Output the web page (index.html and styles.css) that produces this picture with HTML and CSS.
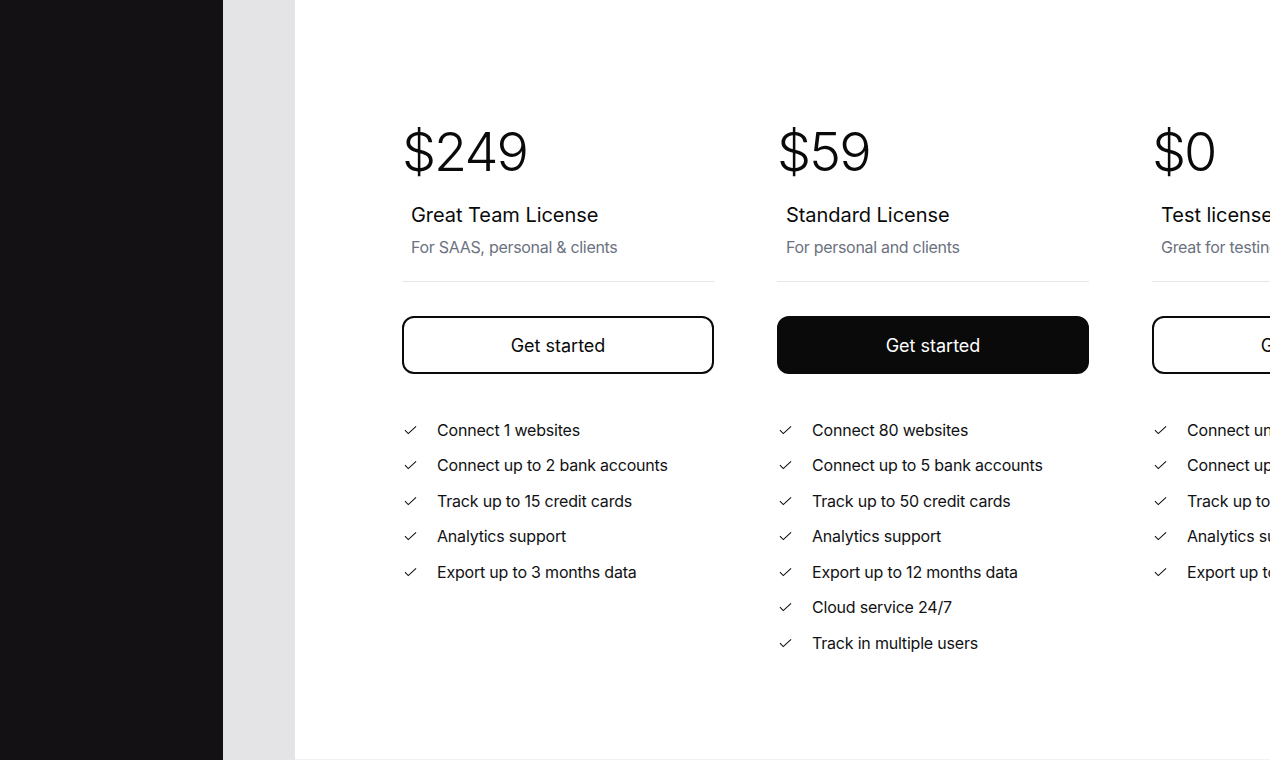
FILE: index.html
```html
<!DOCTYPE html>
<html>
<head>
<meta charset="utf-8">
<link rel="stylesheet" href="styles.css">
</head>
<body>
<div class="layout">
  <aside class="sidebar"></aside>
  <div class="strip"></div>
  <main class="panel">
    <div class="cards">
      <section class="card">
        <div class="price">$249</div>
        <h2 class="title">Great Team License</h2>
        <p class="sub">For SAAS, personal &amp; clients</p>
        <hr class="divider">
        <button class="btn">Get started</button>
        <ul class="features">
          <li><svg class="check" viewBox="0 0 14 10"><path d="M1 5.2l3.6 3.6L13 1"/></svg>Connect 1 websites</li>
          <li><svg class="check" viewBox="0 0 14 10"><path d="M1 5.2l3.6 3.6L13 1"/></svg>Connect up to 2 bank accounts</li>
          <li><svg class="check" viewBox="0 0 14 10"><path d="M1 5.2l3.6 3.6L13 1"/></svg>Track up to 15 credit cards</li>
          <li><svg class="check" viewBox="0 0 14 10"><path d="M1 5.2l3.6 3.6L13 1"/></svg>Analytics support</li>
          <li><svg class="check" viewBox="0 0 14 10"><path d="M1 5.2l3.6 3.6L13 1"/></svg>Export up to 3 months data</li>
        </ul>
      </section>
      <section class="card">
        <div class="price">$59</div>
        <h2 class="title">Standard License</h2>
        <p class="sub">For personal and clients</p>
        <hr class="divider">
        <button class="btn btn-dark">Get started</button>
        <ul class="features">
          <li><svg class="check" viewBox="0 0 14 10"><path d="M1 5.2l3.6 3.6L13 1"/></svg>Connect 80 websites</li>
          <li><svg class="check" viewBox="0 0 14 10"><path d="M1 5.2l3.6 3.6L13 1"/></svg>Connect up to 5 bank accounts</li>
          <li><svg class="check" viewBox="0 0 14 10"><path d="M1 5.2l3.6 3.6L13 1"/></svg>Track up to 50 credit cards</li>
          <li><svg class="check" viewBox="0 0 14 10"><path d="M1 5.2l3.6 3.6L13 1"/></svg>Analytics support</li>
          <li><svg class="check" viewBox="0 0 14 10"><path d="M1 5.2l3.6 3.6L13 1"/></svg>Export up to 12 months data</li>
          <li><svg class="check" viewBox="0 0 14 10"><path d="M1 5.2l3.6 3.6L13 1"/></svg>Cloud service 24/7</li>
          <li><svg class="check" viewBox="0 0 14 10"><path d="M1 5.2l3.6 3.6L13 1"/></svg>Track in multiple users</li>
        </ul>
      </section>
      <section class="card">
        <div class="price">$0</div>
        <h2 class="title">Test license</h2>
        <p class="sub">Great for testing</p>
        <hr class="divider">
        <button class="btn">Get started</button>
        <ul class="features">
          <li><svg class="check" viewBox="0 0 14 10"><path d="M1 5.2l3.6 3.6L13 1"/></svg>Connect unlimited websites</li>
          <li><svg class="check" viewBox="0 0 14 10"><path d="M1 5.2l3.6 3.6L13 1"/></svg>Connect up to 1 bank account</li>
          <li><svg class="check" viewBox="0 0 14 10"><path d="M1 5.2l3.6 3.6L13 1"/></svg>Track up to 5 credit cards</li>
          <li><svg class="check" viewBox="0 0 14 10"><path d="M1 5.2l3.6 3.6L13 1"/></svg>Analytics support</li>
          <li><svg class="check" viewBox="0 0 14 10"><path d="M1 5.2l3.6 3.6L13 1"/></svg>Export up to 1 month data</li>
        </ul>
      </section>
    </div>
  </main>
</div>
</body>
</html>
```

FILE: styles.css
```css
* { box-sizing: border-box; }
html, body { margin: 0; padding: 0; height: 100%; overflow: hidden; }
body { font-family: Inter, "Noto Sans", sans-serif; color: #0a0a0a; background: #fff; }
.layout { display: flex; height: 760px; width: 1270px; overflow: hidden; }
.sidebar { width: 223px; flex-shrink: 0; background: #131114; }
.strip { width: 72px; flex-shrink: 0; background: #e4e4e7; }
.panel { flex: 1; min-width: 0; background: #fff; border-bottom: 1px solid #f1f1f3; padding: 120px 0 0 107px; overflow: hidden; }
.cards { display: flex; gap: 63px; }
.card { width: 312px; flex-shrink: 0; }
.price { font-size: 54px; font-weight: 300; line-height: 64px; letter-spacing: -2px; }
.title { margin: 17px 0 0 9px; font-size: 20px; font-weight: 400; line-height: 28px; letter-spacing: -0.05px; }
.sub { margin: 6px 0 0 9px; font-size: 16px; line-height: 24px; color: #6b7280; letter-spacing: -0.3px; }
.divider { margin: 22px 0 0; border: 0; border-top: 1px solid #e5e7eb; height: 0; }
.btn { display: block; width: 100%; height: 58px; margin-top: 34px; border: 2px solid #0a0a0a; border-radius: 12px; background: #fff; font-family: inherit; font-size: 18px; color: #0a0a0a; }
.btn-dark { background: #0a0a0a; color: #fff; }
.features { list-style: none; margin: 38px 0 0; padding: 0; }
.features li { display: flex; align-items: center; height: 35.5px; font-size: 16px; letter-spacing: -0.2px; color: #111113; }
.check { width: 13px; height: 10px; margin: 0 20px 0 2px; fill: none; stroke: #0a0a0a; stroke-width: 1.1; flex-shrink: 0; }
```
